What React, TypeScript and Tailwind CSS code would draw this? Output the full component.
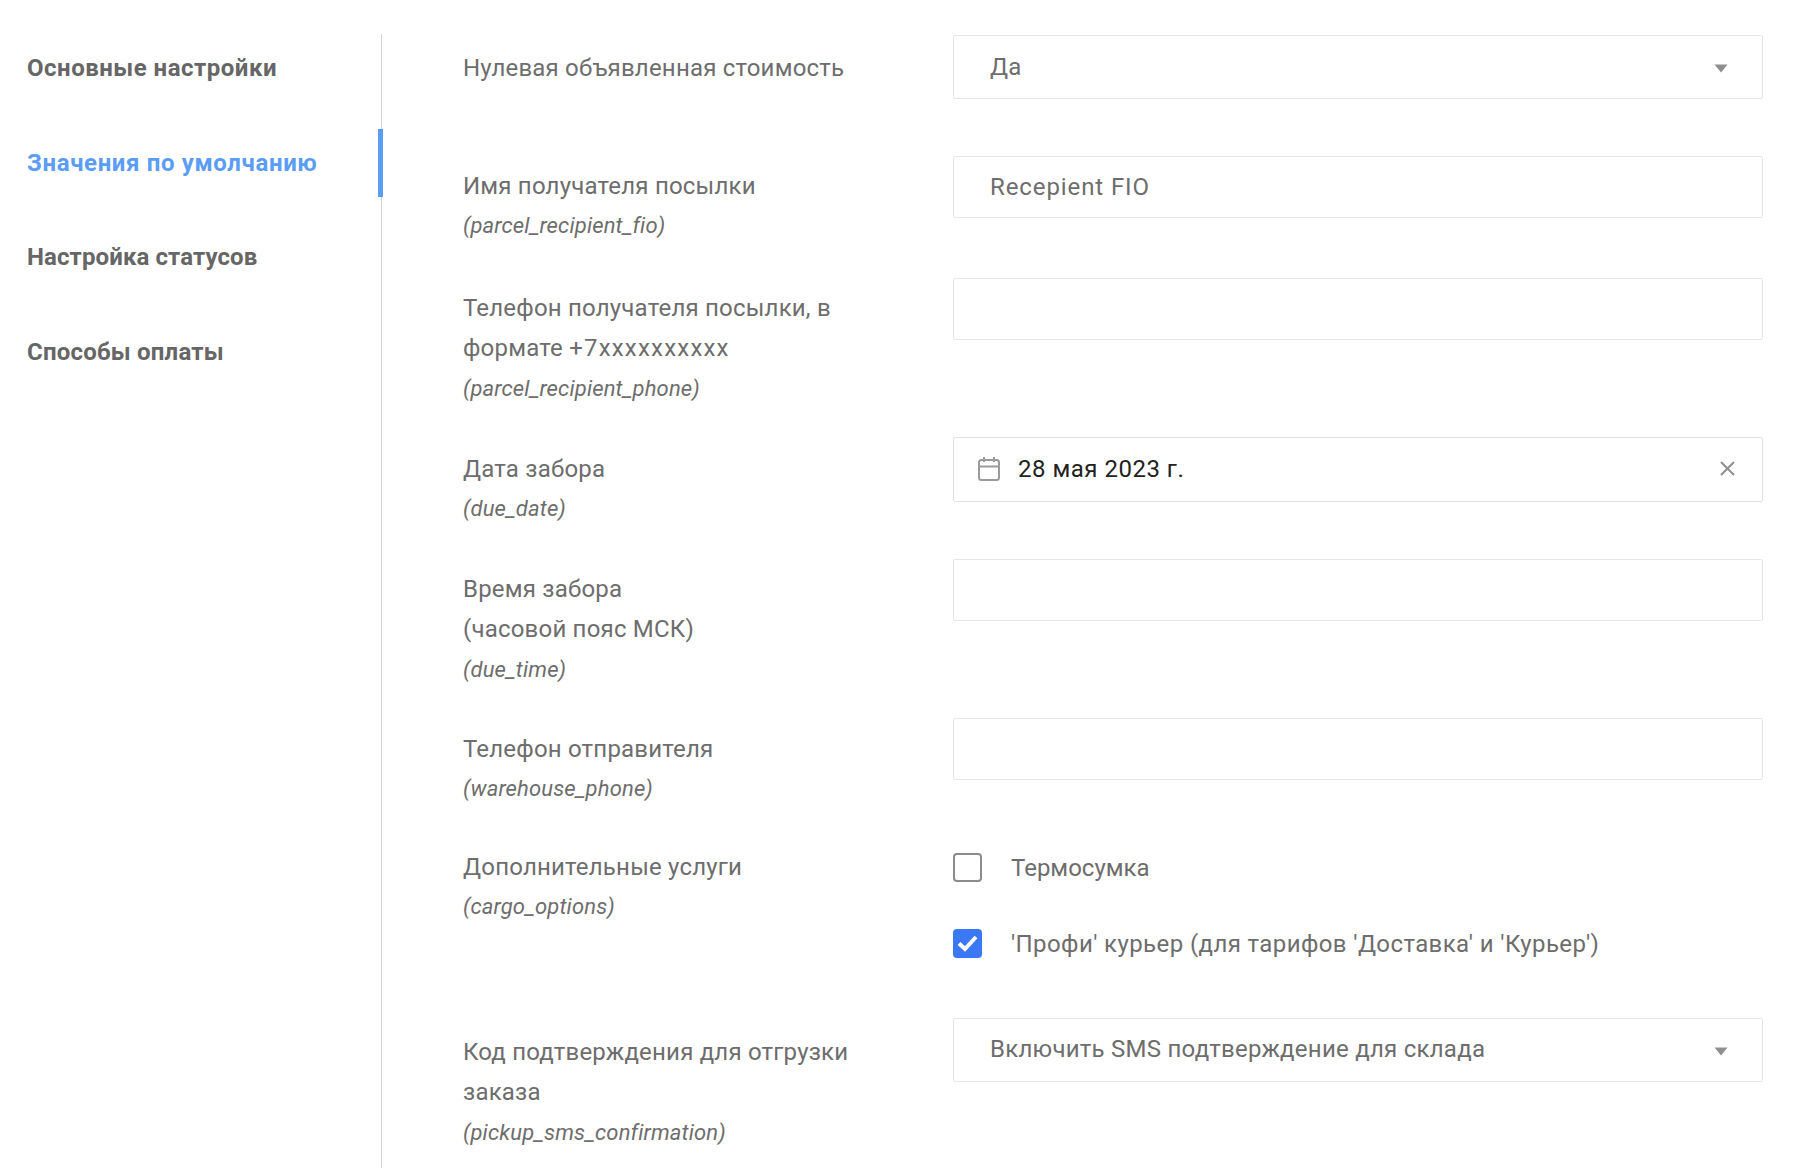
import React from 'react';

const Caret = () => (
  <svg width="14" height="9" viewBox="0 0 14 9" className="mr-[34px] mt-[4px]">
    <path d="M0.5 0.5 H13.5 L7 8.5 Z" fill="#8f8f8f" />
  </svg>
);

const CalendarIcon = () => (
  <svg width="24" height="25" viewBox="0 0 24 25" fill="none" stroke="#9a9a9a" strokeWidth="2" className="mr-[17px]">
    <rect x="2" y="4" width="20" height="20" rx="2.5" />
    <path d="M2 10.5 H22 M7 1 V6 M17 1 V6" />
  </svg>
);

const CloseIcon = () => (
  <svg width="17" height="17" viewBox="0 0 17 17" stroke="#8f8f8f" strokeWidth="2" className="mr-[26px]">
    <path d="M2 2 L15 15 M15 2 L2 15" />
  </svg>
);

const Label: React.FC<{ lines: React.ReactNode[]; code?: string; pt: string }> = ({ lines, code, pt }) => (
  <div className={`w-[490px] shrink-0 pr-[100px] text-[24px] leading-[40.4px] tracking-[0.2px] text-[#6d6d6d] ${pt}`}>
    {lines.map((l, i) => <div key={i} className="whitespace-nowrap">{l}</div>)}
    {code && <div className="italic text-[22px] tracking-[0.15px]">({code})</div>}
  </div>
);

const SelectBox: React.FC<{ value: string }> = ({ value }) => (
  <div className="w-[810px] h-[64px] mt-[1px] border border-[#e6e6e6] rounded-[2px] pl-[36px] pb-[1px] flex items-center justify-between text-[24px] tracking-[0.25px] text-[#6d6d6d]">
    <span>{value}</span>
    <Caret />
  </div>
);

const TextBox: React.FC<{ value?: string }> = ({ value }) => (
  <div className="w-[810px] h-[62px] border border-[#e6e6e6] rounded-[2px] pl-[36px] flex items-center text-[24px] tracking-[0.9px] text-[#6d6d6d]">
    {value}
  </div>
);

const Check: React.FC<{ checked?: boolean; label: string; tracking: string }> = ({ checked, label, tracking }) => (
  <div className={`h-[40px] flex items-center gap-[29px] text-[24px] text-[#6d6d6d] ${tracking}`}>
    {checked ? (
      <span className="w-[29px] h-[29px] rounded-[4px] bg-[#3b78f5] flex items-center justify-center">
        <svg width="21" height="17" viewBox="0 0 21 17" fill="none" stroke="#fff" strokeWidth="4">
          <path d="M2 8.5 L8 14 L19 2" />
        </svg>
      </span>
    ) : (
      <span className="w-[29px] h-[29px] rounded-[4px] border-2 border-[#8c8c8c] bg-white" />
    )}
    <span>{label}</span>
  </div>
);

const navItems = [
  { title: 'Основные настройки', tracking: 'tracking-[0.5px]' },
  { title: 'Значения по умолчанию', tracking: 'tracking-[0.63px]', active: true },
  { title: 'Настройка статусов', tracking: 'tracking-[0.1px]' },
  { title: 'Способы оплаты', tracking: 'tracking-[0.2px]' },
];

export default function App() {
  return (
    <div className="h-[1168px] overflow-hidden bg-white flex pt-[34px]" style={{ fontFamily: 'Roboto, "Noto Sans", sans-serif' }}>
      {/* Sidebar */}
      <div className="w-[382px] shrink-0 border-r border-[#d4d4d4] flex flex-col gap-[26.5px] pl-[27px]">
        {navItems.map(item => (
          <div key={item.title} className={`relative h-[68px] flex items-center text-[24px] font-bold ${item.tracking} ${item.active ? 'text-[#5b9df5]' : 'text-[#666666]'}`}>
            {item.title}
            {item.active && <span className="absolute -right-[2px] top-0 w-[5px] h-full bg-[#5b9df5]" />}
          </div>
        ))}
      </div>

      {/* Form */}
      <div className="flex-1 pl-[81px]">
        <div className="flex mb-[57px]">
          <Label pt="pt-[14px]" lines={['Нулевая объявленная стоимость']} />
          <SelectBox value="Да" />
        </div>
        <div className="flex mb-[31px]">
          <Label pt="pt-[10px]" lines={['Имя получателя посылки']} code="parcel_recipient_fio" />
          <TextBox value="Recepient FIO" />
        </div>
        <div className="flex mb-[28px]">
          <Label
            pt="pt-[10px]"
            lines={['Телефон получателя посылки, в', <>формате <span className="tracking-[1.2px]">+7xxxxxxxxxx</span></>]}
            code="parcel_recipient_phone"
          />
          <TextBox />
        </div>
        <div className="flex mb-[29px]">
          <Label pt="pt-[12px]" lines={['Дата забора']} code="due_date" />
          <div className="w-[810px] h-[65px] border border-[#e1e1e1] rounded-[2px] pl-[23px] pb-[2px] flex items-center justify-between text-[24px] tracking-[0.5px] text-[#222222]">
            <div className="flex items-center">
              <CalendarIcon />
              <span>28 мая 2023 г.</span>
            </div>
            <CloseIcon />
          </div>
        </div>
        <div className="flex mb-[28px]">
          <Label pt="pt-[10px]" lines={['Время забора', '(часовой пояс МСК)']} code="due_time" />
          <TextBox />
        </div>
        <div className="flex mb-[37px]">
          <Label pt="pt-[11px]" lines={['Телефон отправителя']} code="warehouse_phone" />
          <TextBox />
        </div>
        <div className="flex mb-[53px]">
          <Label pt="pt-0" lines={['Дополнительные услуги']} code="cargo_options" />
          <div className="flex flex-col gap-[36px] pt-[1px]">
            <Check label="Термосумка" tracking="tracking-normal" />
            <Check checked label="'Профи' курьер (для тарифов 'Доставка' и 'Курьер')" tracking="tracking-[0.4px]" />
          </div>
        </div>
        <div className="flex">
          <Label pt="pt-[15px]" lines={['Код подтверждения для отгрузки', 'заказа']} code="pickup_sms_confirmation" />
          <SelectBox value="Включить SMS подтверждение для склада" />
        </div>
      </div>
    </div>
  );
}
